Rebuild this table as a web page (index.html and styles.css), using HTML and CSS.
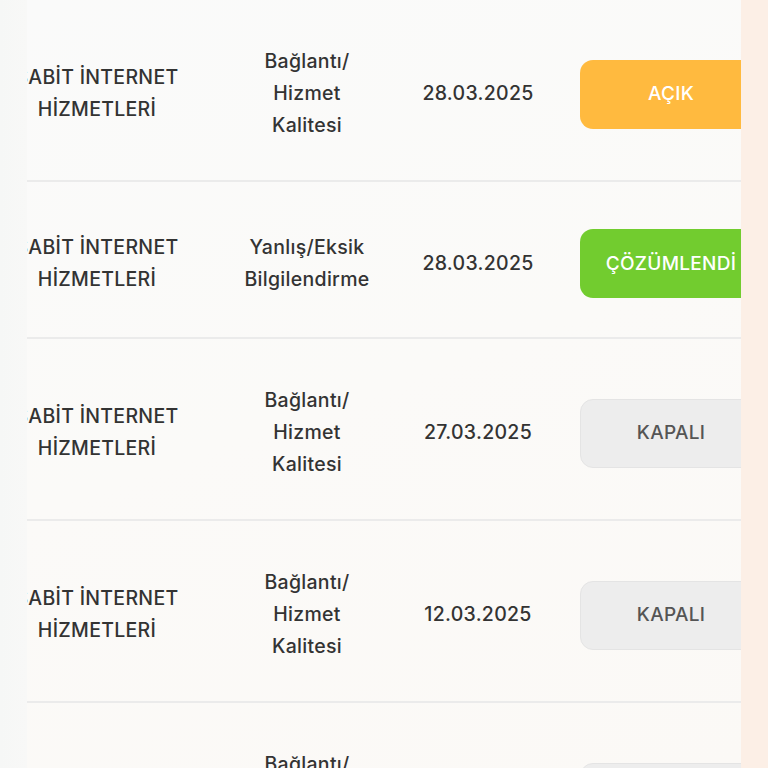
FILE: index.html
```html
<!DOCTYPE html>
<html lang="tr">
<head>
<meta charset="utf-8">
<link rel="stylesheet" href="styles.css">
</head>
<body>
<div class="page">
  <div class="scroller">
    <table class="complaints">
      <colgroup>
        <col class="c-cat"><col class="c-sub"><col class="c-date"><col class="c-status">
      </colgroup>
      <tbody>
        <tr>
          <td>SABİT İNTERNET<br>HİZMETLERİ</td>
          <td>Bağlantı/<br>Hizmet<br>Kalitesi</td>
          <td>28.03.2025</td>
          <td class="status"><span class="badge open">AÇIK</span></td>
        </tr>
        <tr>
          <td>SABİT İNTERNET<br>HİZMETLERİ</td>
          <td>Yanlış/Eksik<br>Bilgilendirme</td>
          <td>28.03.2025</td>
          <td class="status"><span class="badge solved">ÇÖZÜMLENDİ</span></td>
        </tr>
        <tr>
          <td>SABİT İNTERNET<br>HİZMETLERİ</td>
          <td>Bağlantı/<br>Hizmet<br>Kalitesi</td>
          <td>27.03.2025</td>
          <td class="status"><span class="badge closed">KAPALI</span></td>
        </tr>
        <tr>
          <td>SABİT İNTERNET<br>HİZMETLERİ</td>
          <td>Bağlantı/<br>Hizmet<br>Kalitesi</td>
          <td>12.03.2025</td>
          <td class="status"><span class="badge closed">KAPALI</span></td>
        </tr>
        <tr>
          <td>SABİT İNTERNET<br>HİZMETLERİ</td>
          <td>Bağlantı/<br>Hizmet<br>Kalitesi</td>
          <td>05.03.2025</td>
          <td class="status"><span class="badge closed">KAPALI</span></td>
        </tr>
      </tbody>
    </table>
  </div>
</div>
</body>
</html>
```
FILE: styles.css
```css
html, body {
  margin: 0;
  padding: 0;
  height: 100%;
  overflow: hidden;
}
body {
  background: linear-gradient(90deg, #f6f7f6 0, #f8f8f7 27px, #fbfaf8 50%, #fcf6f1 100%);
  font-family: Inter, "Open Sans", "Liberation Sans", sans-serif;
  color: #333;
}
.page {
  height: 768px;
  padding: 0 27px;
  box-sizing: border-box;
  background: linear-gradient(90deg, transparent 0, transparent 741px, #fcefe6 741px);
}
.scroller {
  overflow: hidden;
  height: 100%;
  background: linear-gradient(160deg, #fafafa 0%, #fbfaf8 50%, #fbf9f6 100%);
}
.complaints {
  border-collapse: collapse;
  table-layout: fixed;
  margin-left: -40px;
  width: 807px;
}
.c-cat { width: 220px; }
.c-sub { width: 200px; }
.c-date { width: 142px; }
.c-status { width: 245px; }
.complaints td {
  padding: 45px 0 39px;
  text-align: center;
  vertical-align: middle;
  font-size: 19.5px;
  font-weight: 500;
  line-height: 32px;
  letter-spacing: 0.3px;
  border-bottom: 2px solid #ebebeb;
}
.complaints td.status {
  text-align: left;
  padding-left: 31px;
}
.badge {
  display: flex;
  align-items: center;
  justify-content: center;
  width: 182px;
  height: 69px;
  margin-top: 2px;
  box-sizing: border-box;
  border-radius: 13px;
  font-size: 19px;
  font-weight: 500;
  letter-spacing: 0.3px;
}
.open { background: #ffba3f; color: #fff; }
.solved { background: #72cc2f; color: #fff; }
.closed { background: #ededed; color: #555; border: 1px solid #e4e4e4; }
```
